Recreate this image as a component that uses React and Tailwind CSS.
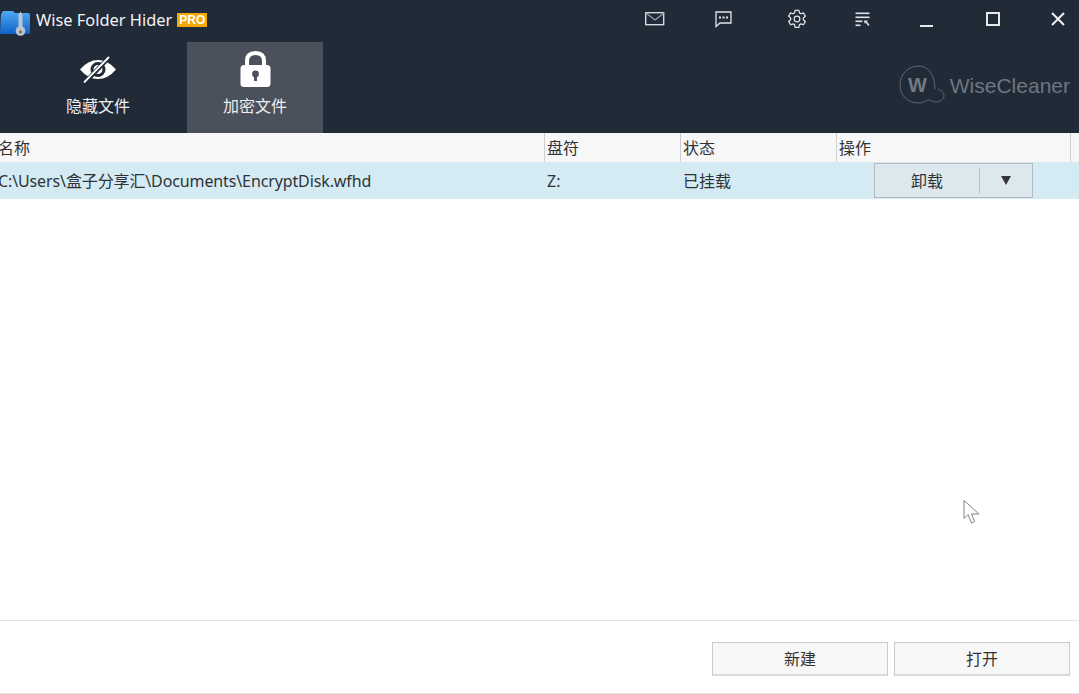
const font = { fontFamily: '"Noto Sans", "Noto Sans CJK SC", sans-serif' };

function Logo() {
  return (
    <svg width="31" height="33" viewBox="0 0 31 33" className="shrink-0">
      <defs>
        <linearGradient id="f" x1="0" y1="0" x2="0" y2="1">
          <stop offset="0" stopColor="#4fa9f2" />
          <stop offset="1" stopColor="#0f62c4" />
        </linearGradient>
      </defs>
      <path d="M1 10 L3 7 H13 L15 9 H28 Q30 9 30 11 V29 Q30 30 28 30 H3 Q0 31 0 28 Z" fill="url(#f)" />
      <rect x="18.5" y="11" width="4" height="14" fill="#b9c7d4" />
      <path d="M18.5 11 L20.5 7.5 L22.5 11Z" fill="#b9c7d4" />
      <circle cx="20.5" cy="27" r="4.8" fill="#bcc4cb" />
      <circle cx="20.5" cy="28" r="1.4" fill="#5f6972" />
    </svg>
  );
}

function IconMail() {
  return (
    <svg width="20" height="14" viewBox="0 0 20 14" fill="none" stroke="#e2e4e7" strokeWidth="1.3">
      <rect x="0.7" y="0.7" width="18" height="12" />
      <path d="M1 1 L10 8 L19 1" stroke="#9aa0a7" />
    </svg>
  );
}
function IconChat() {
  return (
    <svg width="17" height="17" viewBox="0 0 17 17" fill="none">
      <path d="M1 1 H16 V12 H5 L1 15.5 Z" stroke="#e2e4e7" strokeWidth="1.3" />
      <rect x="4" y="5.5" width="2" height="2" fill="#e2e4e7" />
      <rect x="7.5" y="5.5" width="2" height="2" fill="#e2e4e7" />
      <rect x="11" y="5.5" width="2" height="2" fill="#e2e4e7" />
    </svg>
  );
}
function IconGear() {
  return (
    <svg width="20" height="20" viewBox="0 0 24 24" fill="none" stroke="#e2e4e7" strokeWidth="1.5" strokeLinejoin="round">
      <path d="M9.7 1.5h4.6l.6 3.2 1.8 1 3-1.1 2.3 4-2.4 2.1v2.1l2.4 2.1-2.3 4-3-1.1-1.8 1-.6 3.2H9.7l-.6-3.2-1.8-1-3 1.1-2.3-4 2.4-2.1v-2.1L2 8.6l2.3-4 3 1.1 1.8-1z" />
      <circle cx="12" cy="12" r="3.4" />
    </svg>
  );
}
function IconList() {
  return (
    <svg width="15" height="15" viewBox="0 0 15 15" fill="#e2e4e7">
      <rect x="0.5" y="0.5" width="14" height="1.6" />
      <rect x="0.5" y="4.5" width="14" height="1.6" />
      <rect x="0.5" y="8.5" width="7" height="1.6" />
      <rect x="0.5" y="12.5" width="5" height="1.6" />
      <path d="M9 8.5 H13 L11.9 9.6 L14.5 13 L13.2 14 L10.8 10.6 L9.8 12 Z" />
    </svg>
  );
}
function IconMin() {
  return <div className="w-[13px] h-[2px] bg-[#e6e8ea] mt-[13px]" />;
}
function IconMax() {
  return <div className="w-[14px] h-[14px] border-2 border-[#e6e8ea]" />;
}
function IconClose() {
  return (
    <svg width="14" height="14" viewBox="0 0 14 14" stroke="#f0f1f2" strokeWidth="2">
      <path d="M1 1 L13 13 M13 1 L1 13" />
    </svg>
  );
}
function IconEye() {
  return (
    <svg width="38" height="27" viewBox="0 0 38 27">
      <path d="M1 13.5 Q9 4 19 4 Q29 4 37 13.5 Q29 23 19 23 Q9 23 1 13.5 Z" fill="#fff" />
      <circle cx="19" cy="13.5" r="6" fill="none" stroke="#212a37" strokeWidth="3" />
      <path d="M31 0.5 L6 26.5" stroke="#212a37" strokeWidth="4.5" />
      <path d="M30 1 L5 26.5" stroke="#fff" strokeWidth="1.8" />
    </svg>
  );
}
function IconLock() {
  return (
    <svg width="31" height="36" viewBox="0 0 31 36">
      <path d="M7 16 V10 Q7 2 15.5 2 Q24 2 24 10 V16" fill="none" stroke="#fff" strokeWidth="4" />
      <rect x="0.5" y="14" width="30" height="22" rx="3.5" fill="#fff" />
      <circle cx="15.5" cy="23" r="3.4" fill="#4a505c" />
      <rect x="14" y="24" width="3" height="6" fill="#4a505c" />
    </svg>
  );
}
function WiseLogo() {
  return (
    <svg width="46" height="40" viewBox="0 0 46 40" fill="none">
      <path
        d="M36 24 C36 13 31 1 20 1 C9 1 1 9 1 20 C1 31 9 38 20 38 C25 38 27 35 30 35 C32 35 33 37 37 37 C41 37 45 34 45 31 C45 27 42 26 39 24"
        stroke="#5f6772"
        strokeWidth="1"
      />
      <text x="9" y="27" fontSize="20" fontWeight="700" fill="#727a85" style={{ fontFamily: '"Liberation Sans", sans-serif' }}>W</text>
    </svg>
  );
}

const columns = [
  { label: "名称", w: "w-[547px]" },
  { label: "盘符", w: "w-[136px]" },
  { label: "状态", w: "w-[156px]" },
  { label: "操作", w: "w-[234px]" },
];

export default function App() {
  return (
    <div className="w-[1079px] h-[694px] overflow-hidden bg-white relative flex flex-col" style={font}>
      <header className="h-[133px] bg-[#212a37] flex flex-col shrink-0">
        <div className="h-[42px] flex items-start">
          <div className="flex items-center h-[40px]">
            <Logo />
            <span className="ml-[5px] text-[16.4px] leading-none text-[#f1f3f5] whitespace-nowrap">Wise Folder Hider</span>
            <span className="ml-[5px] h-[14px] w-[30px] bg-[#f5a800] text-white text-[12px] font-bold leading-[14px] text-center" style={{ fontFamily: '"Liberation Sans", sans-serif' }}>PRO</span>
          </div>
          <div className="ml-auto flex items-start h-[38px] relative">
            <div className="w-[20px] mt-[12px]"><IconMail /></div>
            <div className="ml-[50px] mt-[11px]"><IconChat /></div>
            <div className="ml-[55px] mt-[9px]"><IconGear /></div>
            <div className="ml-[48px] mt-[12px]"><IconList /></div>
            <div className="ml-[50px] mt-[12px]"><IconMin /></div>
            <div className="ml-[53px] mt-[12px]"><IconMax /></div>
            <div className="ml-[51px] mr-[14px] mt-[12px]"><IconClose /></div>
          </div>
        </div>
        <div className="flex-1 flex items-stretch pl-[30px]">
          <div className="w-[136px] flex flex-col items-center">
            <div className="mt-[14px] h-[27px]"><IconEye /></div>
            <span className="mt-[12px] text-[16px] leading-[22px] text-[#eceef0]">隐藏文件</span>
          </div>
          <div className="ml-[21px] w-[136px] bg-[#4a505c] flex flex-col items-center">
            <div className="mt-[9px] h-[36px]"><IconLock /></div>
            <span className="mt-[8px] text-[16px] leading-[22px] text-[#eceef0]">加密文件</span>
          </div>
          <div className="ml-auto mr-[9px] mt-[23px] flex items-start h-[40px]">
            <WiseLogo />
            <span className="ml-[5px] text-[21px] leading-[42px] text-[#6e7681]" style={{ fontFamily: '"Liberation Sans", sans-serif' }}>WiseCleaner</span>
          </div>
        </div>
      </header>

      <div className="h-[29px] bg-[#f7f7f7] flex shrink-0 text-[16px] leading-[22px] text-[#333]">
        {columns.map((c, i) => (
          <div key={c.label} className={`${c.w} h-full border-r border-[#cfcfcf] flex items-center ${i === 0 ? "-ml-[2px]" : "pl-[2px]"}`}>
            {c.label}
          </div>
        ))}
      </div>

      <div className="h-[37px] bg-[#d4ebf4] flex items-center shrink-0 text-[16px] leading-[22px] text-[#2f3338]">
        <div className="w-[547px] -ml-[2px] whitespace-nowrap tracking-[-0.12px]">C:\Users\盒子分享汇\Documents\EncryptDisk.wfhd</div>
        <div className="w-[136px] pl-[2px]">Z:</div>
        <div className="w-[193px] pl-[2px]">已挂载</div>
        <div className="w-[159px] h-[35px] border border-[#b3bbc0] bg-[#dde8ee] flex items-center">
          <span className="w-[104px] text-center">卸载</span>
          <span className="w-px h-[26px] bg-[#b9c1c6]" />
          <svg width="10" height="9" viewBox="0 0 10 9" className="ml-[21px]"><path d="M0 0 H10 L5 9 Z" fill="#33373c" /></svg>
        </div>
      </div>

      <div className="flex-1" />

      <footer className="h-[74px] shrink-0 border-t border-b border-[#e2e2e2] flex justify-end items-start pt-[21px] pr-[9px] gap-[6px] text-[16px] text-[#333]">
        <button className="w-[176px] h-[34px] bg-[#f7f7f7] border border-[#c9cccf] border-b-2 border-b-[#d6dadd]">新建</button>
        <button className="w-[176px] h-[34px] bg-[#f7f7f7] border border-[#c9cccf] border-b-2 border-b-[#d6dadd]">打开</button>
      </footer>

      <svg width="17" height="26" viewBox="0 0 17 26" className="absolute left-[963px] top-[500px]" fill="#fff" stroke="#7f858b" strokeWidth="1">
        <path d="M1 0.5 V18.5 L5 14.5 L8.5 23 L11.5 21.5 L8.5 14 H16 Z" />
      </svg>
    </div>
  );
}
